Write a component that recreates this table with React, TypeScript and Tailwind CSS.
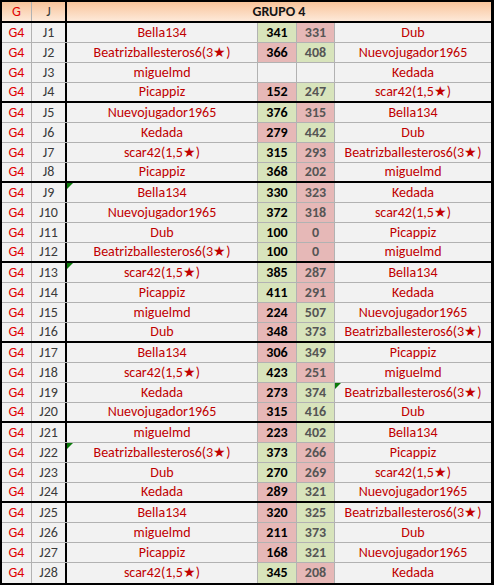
import React from "react";

type Row = [string, string, number | null, number | null, string, ("L" | "R")?];

const rows: Row[] = [
  ["J1", "Bella134", 341, 331, "Dub"],
  ["J2", "Beatrizballesteros6(3★)", 366, 408, "Nuevojugador1965"],
  ["J3", "miguelmd", null, null, "Kedada"],
  ["J4", "Picappiz", 152, 247, "scar42(1,5★)"],
  ["J5", "Nuevojugador1965", 376, 315, "Bella134"],
  ["J6", "Kedada", 279, 442, "Dub"],
  ["J7", "scar42(1,5★)", 315, 293, "Beatrizballesteros6(3★)"],
  ["J8", "Picappiz", 368, 202, "miguelmd"],
  ["J9", "Bella134", 330, 323, "Kedada", "L"],
  ["J10", "Nuevojugador1965", 372, 318, "scar42(1,5★)"],
  ["J11", "Dub", 100, 0, "Picappiz"],
  ["J12", "Beatrizballesteros6(3★)", 100, 0, "miguelmd"],
  ["J13", "scar42(1,5★)", 385, 287, "Bella134", "L"],
  ["J14", "Picappiz", 411, 291, "Kedada"],
  ["J15", "miguelmd", 224, 507, "Nuevojugador1965"],
  ["J16", "Dub", 348, 373, "Beatrizballesteros6(3★)"],
  ["J17", "Bella134", 306, 349, "Picappiz"],
  ["J18", "scar42(1,5★)", 423, 251, "miguelmd"],
  ["J19", "Kedada", 273, 374, "Beatrizballesteros6(3★)", "R"],
  ["J20", "Nuevojugador1965", 315, 416, "Dub"],
  ["J21", "miguelmd", 223, 402, "Bella134"],
  ["J22", "Beatrizballesteros6(3★)", 373, 266, "Picappiz", "L"],
  ["J23", "Dub", 270, 269, "scar42(1,5★)"],
  ["J24", "Kedada", 289, 321, "Nuevojugador1965"],
  ["J25", "Bella134", 320, 325, "Beatrizballesteros6(3★)"],
  ["J26", "miguelmd", 211, 373, "Dub"],
  ["J27", "Picappiz", 168, 321, "Nuevojugador1965"],
  ["J28", "scar42(1,5★)", 345, 208, "Kedada"],
];

const Tri = () => (
  <svg className="absolute left-0 top-0" width="6" height="6" viewBox="0 0 6 6">
    <polygon points="0,0 6,0 0,6" fill="#0b7a0b" />
  </svg>
);

function scoreBg(a: number | null, b: number | null) {
  if (a === null || b === null) return "bg-[#f2f2f2]";
  return a > b ? "bg-[#d8e4bc]" : "bg-[#e6b8b7]";
}

export default function App() {
  return (
    <div
      className="w-[496px] h-[588px] bg-white"
      style={{ fontFamily: "Carlito, Lato, 'Open Sans', sans-serif" }}
    >
      <div className="w-[494px] border-l-2 border-t-2 border-r-[3px] border-b-2 border-black bg-[#f2f2f2] text-[14px] leading-none">
        <div className="flex h-[21px] border-b-2 border-black bg-gradient-to-b from-[#f8c49a] to-[#fde9d9]">
          <div className="w-[30px] border-r border-[#b2b2b2] flex items-center justify-center text-[#e00000]">G</div>
          <div className="w-[35px] border-r-2 border-black flex items-center justify-center text-[#3a3a3a]">J</div>
          <div className="flex-1 flex items-center justify-center font-bold text-[#151515]">GRUPO 4</div>
        </div>
        {rows.map((r, i) => {
          const [j, n1, a, b, n2, tri] = r;
          const groupEnd = (i + 1) % 4 === 0 && i !== rows.length - 1;
          const last = i === rows.length - 1;
          const rowBorder = last
            ? ""
            : groupEnd
            ? "border-b-2 border-black"
            : "border-b border-[#b2b2b2]";
          return (
            <div key={j} className={`flex h-[20px] ${rowBorder}`}>
              <div className="w-[30px] border-r border-[#b2b2b2] flex items-center justify-center text-[#e00000]">G4</div>
              <div className="w-[35px] border-r-2 border-black flex items-center justify-center text-[#3a3a3a]">{j}</div>
              <div className="relative w-[191px] border-r border-[#b2b2b2] flex items-center justify-center text-[#c00000]">
                {tri === "L" && <Tri />}
                {n1}
              </div>
              <div className={`w-[39px] border-r border-[#b2b2b2] flex items-center justify-center font-bold text-black ${scoreBg(a, b)}`}>
                {a ?? ""}
              </div>
              <div className={`w-[38px] border-r border-[#b2b2b2] flex items-center justify-center font-bold text-[#555555] ${scoreBg(b, a)}`}>
                {b ?? ""}
              </div>
              <div className="relative flex-1 flex items-center justify-center text-[#c00000]">
                {tri === "R" && <Tri />}
                {n2}
              </div>
            </div>
          );
        })}
      </div>
    </div>
  );
}
